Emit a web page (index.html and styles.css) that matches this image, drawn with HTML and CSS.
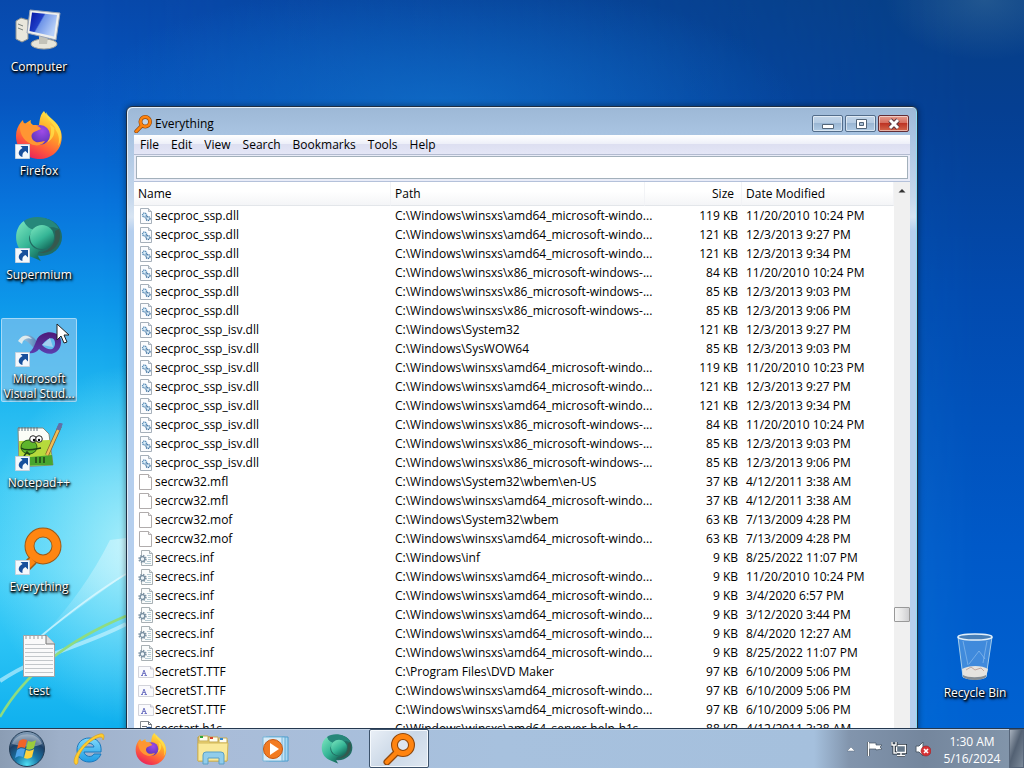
FILE: index.html
```html
<!DOCTYPE html>
<html lang="en">
<head>
<meta charset="utf-8">
<title>Everything</title>
<link rel="stylesheet" href="styles.css">
</head>
<body>
<svg class="defs" aria-hidden="true">
  <defs>
    <linearGradient id="ffx" x1="0.8" y1="0" x2="0.3" y2="1"><stop offset="0" stop-color="#fff04a"/><stop offset=".4" stop-color="#ffa427"/><stop offset=".72" stop-color="#ff5a3c"/><stop offset="1" stop-color="#e8205c"/></linearGradient>
    <radialGradient id="ffp" cx=".6" cy=".3" r=".7"><stop offset="0" stop-color="#a04be8"/><stop offset="1" stop-color="#5a35b8"/></radialGradient>
    <linearGradient id="green" x1="0" y1="0" x2=".7" y2="1"><stop offset="0" stop-color="#7fe8c0"/><stop offset=".6" stop-color="#35b596"/><stop offset="1" stop-color="#16705f"/></linearGradient>
    <linearGradient id="screen" x1="0" y1="0" x2="1" y2=".5"><stop offset="0" stop-color="#0614a0"/><stop offset=".45" stop-color="#1f3fc8"/><stop offset=".5" stop-color="#6f95e8"/><stop offset="1" stop-color="#b8d0f8"/></linearGradient>
    <radialGradient id="orb" cx=".5" cy=".95" r=".95"><stop offset="0" stop-color="#4fe0f4"/><stop offset=".35" stop-color="#1a78a8"/><stop offset=".7" stop-color="#1c3f66"/><stop offset="1" stop-color="#8fa9c2"/></radialGradient>
    <linearGradient id="ie" x1="0" y1="0" x2="0" y2="1"><stop offset="0" stop-color="#7fd8fa"/><stop offset="1" stop-color="#1f9ce4"/></linearGradient>
    <linearGradient id="vs" x1="0" y1="0" x2="0" y2="1"><stop offset="0" stop-color="#4d1a78"/><stop offset="1" stop-color="#5a3fb0"/></linearGradient>
    <linearGradient id="vsl" x1="0" y1="0" x2="1" y2="0"><stop offset="0" stop-color="#b4d6e6"/><stop offset="1" stop-color="#3f72b0"/></linearGradient>
    <symbol id="i-firefox" viewBox="0 0 48 48">
      <path d="M29 0c2 4 7 7 11 11 6 6 8 13 6 21-2 9-11 16-21 16C11 48 1 38 1 25c0-6 2-10 5-14l2-2c0 2 1 3 2 4 2-2 4-3 6-4-1 2 0 4 2 5h6c1-6 1-10 5-14z" fill="url(#ffx)"/>
      <path d="M31 1c-1 8 8 10 10 18-2-3-4-4-6-5 3 8-1 15-4 18 8-4 9-10 8-15 5 5 6 12 4 18 5-7 4-17-3-24-4-4-7-6-9-10z" fill="#ffe14a" opacity=".75"/>
      <circle cx="25" cy="24" r="10" fill="url(#ffp)"/>
      <path d="M5 13c5-2 8 1 13 1 3 0 6 1 8 4l-7 3c-4 2-3 8 2 10 3 1 6-1 9-1-2 4-8 6-14 3C7 29 4 20 5 13z" fill="#ff9633"/>
    </symbol>
    <symbol id="i-supermium" viewBox="0 0 48 44">
      <ellipse cx="26" cy="20" rx="21" ry="19" fill="#216c62"/>
      <path d="M9 4C-2 11-2 32 12 38c4 2 10 4 14 6-6-8-3-10 2-11C15 34 8 18 21 13 16 12 11 9 9 4z" fill="url(#green)"/>
      <path d="M9 4C18-3 38-1 44 12c-8-4-13 0-22 1-7 0-11-4-13-9z" fill="#26877a"/>
      <circle cx="27" cy="20" r="12" fill="url(#green)"/>
      <path d="M44 12c4 12-4 25-20 24 10-2 18-9 16-22z" fill="#3e5046" opacity=".7"/>
    </symbol>
    <symbol id="i-search" viewBox="0 0 32 32">
      <path d="M14 19L4 29" stroke="#90480c" stroke-width="7" stroke-linecap="round"/>
      <circle cx="20" cy="12" r="8.500" fill="#fff" fill-opacity=".35" stroke="#90480c" stroke-width="7"/>
      <path d="M14 19L4 29" stroke="#ff8410" stroke-width="4.500" stroke-linecap="round"/>
      <circle cx="20" cy="12" r="8.500" fill="none" stroke="#ff8410" stroke-width="4.800"/>
    </symbol>
    <symbol id="i-shortcut" viewBox="0 0 15 15">
      <path d="M.5.5h14v14H.5z" fill="#f4f8fc" stroke="#c5d2de"/>
      <path d="M5.500 2H13v7.500L10.500 7C8 8 7 10 7.500 13 3 12 2 7 7.500 4z" fill="#174f9c"/>
    </symbol>
    <symbol id="f-dll" viewBox="0 0 16 16">
      <path d="M2.500.5h8l3 3v12h-11z" fill="#fbfcfe" stroke="#a6b0ba"/><path d="M10.500.5v3h3" fill="#d9e2ea" stroke="#a6b0ba"/>
      <circle cx="6.500" cy="7" r="2" fill="#d9ecf8" stroke="#5a8cb6" stroke-dasharray="1.200 .6" stroke-width="1.400"/>
      <circle cx="10" cy="10.500" r="2" fill="#d9ecf8" stroke="#41729f" stroke-dasharray="1.200 .6" stroke-width="1.400"/>
    </symbol>
    <symbol id="f-blank" viewBox="0 0 16 16">
      <path d="M1.500.5h9l3 3v12h-12z" fill="#fff" stroke="#b0acac"/><path d="M10.500.5v3h3" fill="#eee" stroke="#b0acac"/>
    </symbol>
    <symbol id="f-inf" viewBox="0 0 16 16">
      <path d="M3.500.5h8l3 3v12h-11z" fill="#fafcfc" stroke="#a8b0b4"/><path d="M11.500.5v3h3" fill="#e3e8ea" stroke="#a8b0b4"/>
      <path d="M9 5.500h4M10 7.500h3M10 9.500h3M9 11.500h4M7 13.500h6" stroke="#b5cad2"/>
      <circle cx="4.500" cy="9" r="3" fill="none" stroke="#8296a6" stroke-width="2.400" stroke-dasharray="1.300 1.056"/>
      <circle cx="4.500" cy="9" r="2.300" fill="#eef4f8" stroke="#788fa0" stroke-width="1.200"/>
    </symbol>
    <symbol id="f-ttf" viewBox="0 0 16 16">
      <path d="M.5 2.500h12l3 2.500v8.500H.5z" fill="#fafafd" stroke="#d2d3da"/><path d="M12.500 2.500V5h3" fill="#e6e6ee" stroke="#c4c5d0"/>
      <path d="M3 11.500h2M6.500 11.500H9M4 11.500l2-5.500 2 5.500M5 9.500h2.500" stroke="#7377c4" fill="none"/>
    </symbol>
    <symbol id="f-help" viewBox="0 0 16 16">
      <path d="M2.500.5h8l3 3v12h-11z" fill="#fff" stroke="#83898f"/><path d="M10.500.5v3h3M4 5.500h5M4 7.500h4" stroke="#666d75" fill="none"/>
      <circle cx="11" cy="9.500" r="3" fill="#cfe0f4" stroke="#2d5594" stroke-width="1.500"/>
    </symbol>
  </defs>
</svg>

<main class="desktop">
  <svg class="wallpaper" viewBox="0 0 1024 728" preserveAspectRatio="none" aria-hidden="true">
    <defs>
      <linearGradient id="wl" x1="0" y1="0" x2="0" y2="1">
        <stop offset="0" stop-color="#0849ac"/><stop offset=".14" stop-color="#0656c0"/><stop offset=".28" stop-color="#0874dc"/><stop offset=".42" stop-color="#0d98ea"/><stop offset=".55" stop-color="#20b8f0"/><stop offset=".67" stop-color="#40cbf5"/><stop offset=".78" stop-color="#48d0f8"/><stop offset=".88" stop-color="#2bc3f5"/><stop offset="1" stop-color="#0fb0ee"/>
      </linearGradient>
      <linearGradient id="wr" x1="0" y1="0" x2="0" y2="1">
        <stop offset="0" stop-color="#073f85"/><stop offset=".15" stop-color="#053f92"/><stop offset=".4" stop-color="#024aae"/><stop offset=".75" stop-color="#0059c8"/><stop offset="1" stop-color="#0062d2"/>
      </linearGradient>
      <linearGradient id="fade" x1="0" y1="0" x2="1" y2="0"><stop offset=".1" stop-color="#000"/><stop offset=".95" stop-color="#fff"/></linearGradient>
      <mask id="wm"><rect width="1024" height="728" fill="url(#fade)"/></mask>
      <radialGradient id="wt"><stop offset="0" stop-color="#1272cc" stop-opacity=".75"/><stop offset="1" stop-color="#1272cc" stop-opacity="0"/></radialGradient>
      <radialGradient id="wh"><stop offset="0" stop-color="#6e9bb0" stop-opacity=".25"/><stop offset="1" stop-color="#6e9bb0" stop-opacity="0"/></radialGradient>
      <radialGradient id="glow"><stop offset="0" stop-color="#b5f3fb" stop-opacity=".9"/><stop offset="1" stop-color="#9cecfb" stop-opacity="0"/></radialGradient>
      <linearGradient id="ray" x1="0" y1="1" x2="1" y2="0"><stop offset="0" stop-color="#fff" stop-opacity="0"/><stop offset="1" stop-color="#e4fbff" stop-opacity=".5"/></linearGradient>
    </defs>
    <rect width="1024" height="728" fill="url(#wl)"/>
    <rect width="1024" height="728" fill="url(#wr)" mask="url(#wm)"/>
    <ellipse cx="440" cy="110" rx="360" ry="130" fill="url(#wt)"/>
    <ellipse cx="985" cy="0" rx="100" ry="60" fill="url(#wh)"/>
    <ellipse cx="135" cy="545" rx="150" ry="180" fill="url(#glow)"/>
    <path d="M42 636Q84 592 110 540L126 538V574Q90 600 42 636z" fill="url(#ray)"/>
    <path d="M0 681C40 654 84 646 126 624" fill="none" stroke="#d3f7ff" stroke-width="4" opacity=".6"/>
    <path d="M40 637C70 612 96 592 126 574" fill="none" stroke="#e6fbff" stroke-width="2" opacity=".7"/>
    <path d="M0 717C28 668 78 636 126 616" fill="none" stroke="#8fdc80" stroke-width="2.500"/>
  </svg>

  <nav class="shortcuts" aria-label="Desktop">
    <a class="shortcut" href="#computer">
      <svg class="art" viewBox="0 0 48 48" aria-hidden="true">
        <path d="M1 14l5-3 7 2v19l-6 3-6-3z" fill="#e9e7dc" stroke="#8f9492"/><path d="M3 17l5 2M3 21l5 2" stroke="#77807c"/>
        <ellipse cx="29" cy="37" rx="13" ry="5" fill="#e7e5da" stroke="#a8a69c"/><path d="M24 28l9 2-1 7h-8z" fill="#c3c2b8"/>
        <path d="M15 3l30 3-4 27-29-7z" fill="#eeefed" stroke="#9ba5b5"/><path d="M17 5.500l25 2.500-3 21.500L14.500 24z" fill="url(#screen)"/>
      </svg>
      <span class="label">Computer</span>
    </a>
    <a class="shortcut" href="#firefox">
      <span class="art"><svg class="art-fill" aria-hidden="true"><use href="#i-firefox"/></svg><svg class="arrow" aria-hidden="true"><use href="#i-shortcut"/></svg></span>
      <span class="label">Firefox</span>
    </a>
    <a class="shortcut" href="#supermium">
      <span class="art"><svg class="art-fill" aria-hidden="true"><use href="#i-supermium"/></svg><svg class="arrow" aria-hidden="true"><use href="#i-shortcut"/></svg></span>
      <span class="label">Supermium</span>
    </a>
    <a class="shortcut is-hot" href="#visual-studio">
      <span class="art"><svg class="art-fill" viewBox="0 0 48 48" aria-hidden="true"><path d="M4 22c3-7 10-8 15-3l7 8-4 5-7-7c-4-4-7-5-11-3z" fill="url(#vsl)"/><path d="M3 22c4-6 9-7 14-2-5-2-9 0-10 5z" fill="#deebee"/><path fill-rule="evenodd" d="M22 20c6-10 25-9 24 4-1 12-14 14-22 6-3 4-7 5-11 4 5-2 7-9 9-14zm5 6c7 7 13 5 13-2 0-5-5-8-13 2z" fill="url(#vs)"/><path d="M27 26l8-7 3 9z" fill="#b7d3f0" opacity=".8"/></svg><svg class="arrow" aria-hidden="true"><use href="#i-shortcut"/></svg></span>
      <span class="label">Microsoft Visual Stud...</span>
    </a>
    <a class="shortcut" href="#notepad">
      <span class="art"><svg class="art-fill" viewBox="0 0 48 48" aria-hidden="true"><path d="M3 5h25l6 6 4 31-34 2z" fill="#fbfdf8" stroke="#818a80"/><path d="M4 4v4m3-4v4m3-4v4m3-4v4m3-4v4m3-4v4m3-4v4" stroke="#637580"/><path d="M4 18l31-1 2 25-33 1z" fill="#b6da3c"/><path d="M5 35l32-3 1 10-33 1z" fill="#48a52e"/><ellipse cx="14" cy="24" rx="8" ry="7" fill="#5eb52c" stroke="#285c18"/><circle cx="18" cy="16" r="3.300" fill="#fff" stroke="#222"/><circle cx="24" cy="16" r="3.300" fill="#fff" stroke="#222"/><circle cx="19" cy="17" r="1.200"/><circle cx="24" cy="17" r="1.200"/><path d="M6 25c6 4 14 1 20 0M9 33l3-4 3 3m6 8v-6m4 6v-6m4 6v-6" fill="none" stroke="#1f4416" stroke-width="1.500"/><path d="M45 3L32 32" stroke="#81602d" stroke-width="4"/><path d="M45 3L32 32" stroke="#f0bd55" stroke-width="2.500"/><path d="M46 0l-3 7" stroke="#626fa8" stroke-width="4"/></svg><svg class="arrow" aria-hidden="true"><use href="#i-shortcut"/></svg></span>
      <span class="label">Notepad++</span>
    </a>
    <a class="shortcut" href="#everything">
      <span class="art"><svg class="art-fill" viewBox="0 0 48 48" aria-hidden="true"><path d="M18 33L7 44" stroke="#9c5a18" stroke-width="10"/><circle cx="28" cy="19" r="13.500" fill="none" stroke="#9c5a18" stroke-width="10"/><path d="M18 33L7 44" stroke="#ff8611" stroke-width="7"/><circle cx="28" cy="19" r="13.500" fill="none" stroke="#ff8611" stroke-width="8"/></svg><svg class="arrow" aria-hidden="true"><use href="#i-shortcut"/></svg></span>
      <span class="label">Everything</span>
    </a>
    <a class="shortcut" href="#test">
      <svg class="art" viewBox="0 0 48 48" aria-hidden="true"><path d="M8.500 4.500h23l8 8v33h-31z" fill="#fafafa" stroke="#a0a4a8"/><path d="M31 4v9h9" fill="#ddd" stroke="#777"/><path d="M11 5v3m4-3v3m4-3v3m4-3v3m4-3v3" stroke="#999"/><path d="M10 13.500h20M10 17.500h28M10 21.500h28M10 25.500h28M10 29.500h28M10 33.500h28M10 37.500h28M10 41.500h28" stroke="#c3c7ca"/></svg>
      <span class="label">test</span>
    </a>
  </nav>

  <a class="shortcut recycle" href="#recycle-bin">
    <svg class="art" viewBox="0 0 48 48" aria-hidden="true"><path d="M7 4l5 40c5 3 19 3 23 0l6-40z" fill="#7fb6ea" fill-opacity=".5" stroke="#a5cdea"/><path d="M11 36c7-4 20-4 26 0l-2 8c-5 3-18 3-23 0z" fill="#e5e3df"/><path d="M12 42c5 3 18 3 23 0v2c-4 4-18 4-23 0z" fill="#858d94"/><path d="M12 8l5 24M36 8l-4 22M18 31l10-13 6 8" stroke="#d8effc" fill="none" opacity=".35"/><path d="M15 37l5-3 4 3 6-2 3 3" stroke="#c3a8a0" fill="none"/><ellipse cx="24" cy="4" rx="17" ry="3" fill="#477fb8" stroke="#e2f0fa" stroke-width="1.500"/></svg>
    <span class="label">Recycle Bin</span>
  </a>

  <section class="window" aria-label="Everything">
    <header class="titlebar">
      <svg class="title-icon" aria-hidden="true"><use href="#i-search"/></svg>
      <h1 class="title">Everything</h1>
      <div class="controls">
        <button class="control" type="button" aria-label="Minimize"><svg class="glyph" viewBox="0 0 14 12" aria-hidden="true"><path d="M1.500 6.500h11v4h-11z" fill="#fff" stroke="#526579"/></svg></button>
        <button class="control" type="button" aria-label="Maximize"><svg class="glyph" viewBox="0 0 14 12" aria-hidden="true"><path d="M2.500 1.500h10v9h-10z" fill="#fff" stroke="#526579"/><path d="M5.500 4.500h4v3h-4z" fill="#a9bfd5" stroke="#526579"/></svg></button>
        <button class="control close" type="button" aria-label="Close"><svg class="glyph" viewBox="0 0 14 12" aria-hidden="true"><path d="M3 2l8 8M11 2l-8 8" stroke="#5f3840" stroke-width="5"/><path d="M3 2l8 8M11 2l-8 8" stroke="#fff" stroke-width="3"/></svg></button>
      </div>
    </header>
    <div class="client">
      <div class="menubar" role="menubar">
        <button class="menu" type="button" role="menuitem">File</button>
        <button class="menu" type="button" role="menuitem">Edit</button>
        <button class="menu" type="button" role="menuitem">View</button>
        <button class="menu" type="button" role="menuitem">Search</button>
        <button class="menu" type="button" role="menuitem">Bookmarks</button>
        <button class="menu" type="button" role="menuitem">Tools</button>
        <button class="menu" type="button" role="menuitem">Help</button>
      </div>
      <div class="searchbar"><input class="search" type="text" aria-label="Search"></div>
      <div class="results">
        <div class="list">
        <table class="files">
          <colgroup><col class="col-name"><col class="col-path"><col class="col-size"><col></colgroup>
          <thead><tr><th>Name</th><th>Path</th><th class="size">Size</th><th>Date Modified</th></tr></thead>
          <tbody>
            <tr><td><svg class="file"><use href="#f-dll"/></svg>secproc_ssp.dll</td><td>C:\Windows\winsxs\amd64_microsoft-windo...</td><td class="size">119 KB</td><td>11/20/2010 10:24 PM</td></tr>
            <tr><td><svg class="file"><use href="#f-dll"/></svg>secproc_ssp.dll</td><td>C:\Windows\winsxs\amd64_microsoft-windo...</td><td class="size">121 KB</td><td>12/3/2013 9:27 PM</td></tr>
            <tr><td><svg class="file"><use href="#f-dll"/></svg>secproc_ssp.dll</td><td>C:\Windows\winsxs\amd64_microsoft-windo...</td><td class="size">121 KB</td><td>12/3/2013 9:34 PM</td></tr>
            <tr><td><svg class="file"><use href="#f-dll"/></svg>secproc_ssp.dll</td><td>C:\Windows\winsxs\x86_microsoft-windows-...</td><td class="size">84 KB</td><td>11/20/2010 10:24 PM</td></tr>
            <tr><td><svg class="file"><use href="#f-dll"/></svg>secproc_ssp.dll</td><td>C:\Windows\winsxs\x86_microsoft-windows-...</td><td class="size">85 KB</td><td>12/3/2013 9:03 PM</td></tr>
            <tr><td><svg class="file"><use href="#f-dll"/></svg>secproc_ssp.dll</td><td>C:\Windows\winsxs\x86_microsoft-windows-...</td><td class="size">85 KB</td><td>12/3/2013 9:06 PM</td></tr>
            <tr><td><svg class="file"><use href="#f-dll"/></svg>secproc_ssp_isv.dll</td><td>C:\Windows\System32</td><td class="size">121 KB</td><td>12/3/2013 9:27 PM</td></tr>
            <tr><td><svg class="file"><use href="#f-dll"/></svg>secproc_ssp_isv.dll</td><td>C:\Windows\SysWOW64</td><td class="size">85 KB</td><td>12/3/2013 9:03 PM</td></tr>
            <tr><td><svg class="file"><use href="#f-dll"/></svg>secproc_ssp_isv.dll</td><td>C:\Windows\winsxs\amd64_microsoft-windo...</td><td class="size">119 KB</td><td>11/20/2010 10:23 PM</td></tr>
            <tr><td><svg class="file"><use href="#f-dll"/></svg>secproc_ssp_isv.dll</td><td>C:\Windows\winsxs\amd64_microsoft-windo...</td><td class="size">121 KB</td><td>12/3/2013 9:27 PM</td></tr>
            <tr><td><svg class="file"><use href="#f-dll"/></svg>secproc_ssp_isv.dll</td><td>C:\Windows\winsxs\amd64_microsoft-windo...</td><td class="size">121 KB</td><td>12/3/2013 9:34 PM</td></tr>
            <tr><td><svg class="file"><use href="#f-dll"/></svg>secproc_ssp_isv.dll</td><td>C:\Windows\winsxs\x86_microsoft-windows-...</td><td class="size">84 KB</td><td>11/20/2010 10:24 PM</td></tr>
            <tr><td><svg class="file"><use href="#f-dll"/></svg>secproc_ssp_isv.dll</td><td>C:\Windows\winsxs\x86_microsoft-windows-...</td><td class="size">85 KB</td><td>12/3/2013 9:03 PM</td></tr>
            <tr><td><svg class="file"><use href="#f-dll"/></svg>secproc_ssp_isv.dll</td><td>C:\Windows\winsxs\x86_microsoft-windows-...</td><td class="size">85 KB</td><td>12/3/2013 9:06 PM</td></tr>
            <tr><td><svg class="file"><use href="#f-blank"/></svg>secrcw32.mfl</td><td>C:\Windows\System32\wbem\en-US</td><td class="size">37 KB</td><td>4/12/2011 3:38 AM</td></tr>
            <tr><td><svg class="file"><use href="#f-blank"/></svg>secrcw32.mfl</td><td>C:\Windows\winsxs\amd64_microsoft-windo...</td><td class="size">37 KB</td><td>4/12/2011 3:38 AM</td></tr>
            <tr><td><svg class="file"><use href="#f-blank"/></svg>secrcw32.mof</td><td>C:\Windows\System32\wbem</td><td class="size">63 KB</td><td>7/13/2009 4:28 PM</td></tr>
            <tr><td><svg class="file"><use href="#f-blank"/></svg>secrcw32.mof</td><td>C:\Windows\winsxs\amd64_microsoft-windo...</td><td class="size">63 KB</td><td>7/13/2009 4:28 PM</td></tr>
            <tr><td><svg class="file"><use href="#f-inf"/></svg>secrecs.inf</td><td>C:\Windows\inf</td><td class="size">9 KB</td><td>8/25/2022 11:07 PM</td></tr>
            <tr><td><svg class="file"><use href="#f-inf"/></svg>secrecs.inf</td><td>C:\Windows\winsxs\amd64_microsoft-windo...</td><td class="size">9 KB</td><td>11/20/2010 10:24 PM</td></tr>
            <tr><td><svg class="file"><use href="#f-inf"/></svg>secrecs.inf</td><td>C:\Windows\winsxs\amd64_microsoft-windo...</td><td class="size">9 KB</td><td>3/4/2020 6:57 PM</td></tr>
            <tr><td><svg class="file"><use href="#f-inf"/></svg>secrecs.inf</td><td>C:\Windows\winsxs\amd64_microsoft-windo...</td><td class="size">9 KB</td><td>3/12/2020 3:44 PM</td></tr>
            <tr><td><svg class="file"><use href="#f-inf"/></svg>secrecs.inf</td><td>C:\Windows\winsxs\amd64_microsoft-windo...</td><td class="size">9 KB</td><td>8/4/2020 12:27 AM</td></tr>
            <tr><td><svg class="file"><use href="#f-inf"/></svg>secrecs.inf</td><td>C:\Windows\winsxs\amd64_microsoft-windo...</td><td class="size">9 KB</td><td>8/25/2022 11:07 PM</td></tr>
            <tr><td><svg class="file"><use href="#f-ttf"/></svg>SecretST.TTF</td><td>C:\Program Files\DVD Maker</td><td class="size">97 KB</td><td>6/10/2009 5:06 PM</td></tr>
            <tr><td><svg class="file"><use href="#f-ttf"/></svg>SecretST.TTF</td><td>C:\Windows\winsxs\amd64_microsoft-windo...</td><td class="size">97 KB</td><td>6/10/2009 5:06 PM</td></tr>
            <tr><td><svg class="file"><use href="#f-ttf"/></svg>SecretST.TTF</td><td>C:\Windows\winsxs\amd64_microsoft-windo...</td><td class="size">97 KB</td><td>6/10/2009 5:06 PM</td></tr>
            <tr><td><svg class="file"><use href="#f-help"/></svg>secstart.h1s</td><td>C:\Windows\winsxs\amd64_server-help-h1s...</td><td class="size">88 KB</td><td>4/12/2011 3:38 AM</td></tr>
          </tbody>
        </table>
        </div>
        <div class="scrollbar" aria-hidden="true">
          <svg class="scroll-arrow" viewBox="0 0 16 17"><path d="M4.500 10.500L8 7l3.500 3.500z" fill="#333"/></svg>
          <div class="scroll-space"></div>
          <div class="thumb"></div>
          <div class="scroll-rest"></div>
          <svg class="scroll-arrow" viewBox="0 0 16 17"><path d="M4.500 7L8 10.500 11.500 7z" fill="#333"/></svg>
        </div>
      </div>
    </div>
  </section>

  <svg class="pointer" viewBox="0 0 14 21" aria-hidden="true"><path d="M1 1v16l4-4 3 7 3-1-3-7h5z" fill="#fff" stroke="#222"/></svg>
</main>

<footer class="taskbar">
  <button class="start" type="button" aria-label="Start">
    <svg class="orb" viewBox="0 0 38 38" aria-hidden="true"><circle cx="19" cy="19" r="17.500" fill="url(#orb)" stroke="#233c55"/><path d="M4 14C8 1 30 1 34 14c-9 5-20 2-30 0z" fill="#fff" opacity=".35"/><path d="M11 11c3-2 5-2 8-1l-2 8c-3-1-5-1-8 1z" fill="#f06428"/><path d="M20 11c3 1 5 1 8-1l-2 8c-3 2-5 2-8 1z" fill="#9ccc3c"/><path d="M9 20c3-2 5-2 8-1l-2 8c-3-1-5-1-8 1z" fill="#4da3e8"/><path d="M18 20c3 1 5 1 8-1l-2 8c-3 2-5 2-8 1z" fill="#ffd23c"/></svg>
  </button>
  <nav class="tasks" aria-label="Taskbar">
    <button class="task" type="button" aria-label="Internet Explorer"><svg class="task-icon" viewBox="0 0 32 32" aria-hidden="true"><path d="M28 21c-2 5-6 8-12 8C9 29 4 24 4 17S9 5 16 5c8 0 13 5 12 14H11c1 5 8 6 10 2zM11 14h10c-1-5-9-5-10 0z" fill="url(#ie)" stroke="#1b78bd" fill-rule="evenodd"/><path d="M2 31C-3 25 14 4 27 1c4-1 5 2 3 6 0-2-1-3-3-3C17 6 4 20 5 29c0 2-2 3-3 2z" fill="#ffcd2e" stroke="#d69b16" stroke-width=".6"/></svg></button>
    <button class="task" type="button" aria-label="Firefox"><svg class="task-icon" aria-hidden="true"><use href="#i-firefox"/></svg></button>
    <button class="task" type="button" aria-label="Windows Explorer"><svg class="task-icon" viewBox="0 0 32 32" aria-hidden="true"><path d="M1 4h12l2 3h15v21H1z" fill="#efd779" stroke="#bd9b3c"/><path d="M2 3h9v5H2zM12 4h9v5h-9zM22 5h8v5h-8z" fill="#fffdf0" stroke="#c5ab52"/><path d="M3 4h3" stroke="#2ba73a" stroke-width="2"/><path d="M13 5h3" stroke="#da422a" stroke-width="2"/><path d="M23 6h3" stroke="#3589d0" stroke-width="2"/><path d="M1 10h30l-1 18H1z" fill="#fae999" stroke="#d2b75a"/><path d="M6 31v-9q0-3 3-3h15q3 0 3 3v9h-5v-6H11v6z" fill="#91cdeb" stroke="#5a9fc6"/></svg></button>
    <button class="task" type="button" aria-label="Windows Media Player"><svg class="task-icon" viewBox="0 0 32 32" aria-hidden="true"><path d="M10 4h19v24H10z" fill="#a8d7f1" stroke="#4c9ccc"/><path d="M7 4h19v24H7z" fill="#c3e3f5" stroke="#62a9d3"/><path d="M4 4h19v24H4z" fill="#d8ecf8" stroke="#78b6d8"/><circle cx="14" cy="16" r="9.500" fill="#f27b22" stroke="#c65712"/><path d="M11 10l9 6-9 6z" fill="#fff"/></svg></button>
    <button class="task" type="button" aria-label="Supermium"><svg class="task-icon" aria-hidden="true"><use href="#i-supermium"/></svg></button>
    <button class="task is-active" type="button" aria-label="Everything"><svg class="task-icon" aria-hidden="true"><use href="#i-search"/></svg></button>
  </nav>
  <div class="tray">
    <button class="tray-item" type="button" aria-label="Show hidden icons"><svg class="tray-icon" viewBox="0 0 16 16" aria-hidden="true"><path d="M4 10l4-4 4 4z" fill="#fff" stroke="#5d6e82" stroke-width=".5"/></svg></button>
    <button class="tray-item" type="button" aria-label="Action Center"><svg class="tray-icon" viewBox="0 0 16 16" aria-hidden="true"><path d="M1.500 1v14" stroke="#34404c" stroke-width="3"/><path d="M2 2h7v2h6l-2 2 2 2-6 1V8H2z" fill="#fff" stroke="#42505e" stroke-width=".7"/><path d="M1.500 1v14" stroke="#fff" stroke-width="1.500"/></svg></button>
    <button class="tray-item" type="button" aria-label="Network"><svg class="tray-icon" viewBox="0 0 16 16" aria-hidden="true"><path d="M5.500 4.500h9v7h-9zM10 12v2M6 14.500h8" fill="#657789" stroke="#27323e" stroke-width="3"/><path d="M5.500 4.500h9v7h-9zM10 12v2M6 14.500h8" fill="#657789" stroke="#fff" stroke-width="1.400"/><path d="M1 1v3h4V1M3 4v8h3" fill="none" stroke="#27323e" stroke-width="3"/><path d="M1 1v3h4V1M3 4v8h3" fill="none" stroke="#fff" stroke-width="1.400"/></svg></button>
    <button class="tray-item" type="button" aria-label="Volume muted"><svg class="tray-icon" viewBox="0 0 16 16" aria-hidden="true"><path d="M1 5h3l4-4v14l-4-4H1z" fill="#fff" stroke="#515e6c"/><circle cx="11" cy="10" r="5" fill="#d83235" stroke="#962024" stroke-width=".6"/><path d="M9 8l4 4M13 8l-4 4" stroke="#fff" stroke-width="1.600"/></svg></button>
  </div>
  <time class="clock" datetime="2024-05-16T01:30"><span>1:30 AM</span><span>5/16/2024</span></time>
  <button class="peek" type="button" aria-label="Show desktop"></button>
</footer>
</body>
</html>
```

FILE: styles.css
```css
* { box-sizing: border-box; }

body {
  margin: 0;
  height: 100vh;
  display: flex;
  flex-direction: column;
  overflow: hidden;
  font: 12px/16px "Open Sans", "Noto Sans", sans-serif;
  color: #000;
}

button {
  margin: 0;
  padding: 0;
  border: 0;
  background: none;
  font: inherit;
  color: inherit;
}

.defs { position: absolute; width: 0; height: 0; }

/* Desktop */
.desktop {
  position: relative;
  flex: 1;
  min-height: 0;
  overflow: hidden;
}

.wallpaper { position: absolute; inset: 0; width: 100%; height: 100%; }

.shortcuts {
  position: relative;
  display: flex;
  flex-direction: column;
  align-items: flex-start;
  gap: 20px;
  padding: 6px 1px;
}

.shortcut {
  display: flex;
  flex-direction: column;
  align-items: center;
  width: 76px;
  height: 84px;
  border: 1px solid transparent;
  border-radius: 2px;
  color: #fff;
  text-decoration: none;
}

.shortcut.is-hot {
  border-color: rgba(190, 228, 250, .75);
  background: rgba(160, 205, 238, .55);
}

.art { position: relative; flex: none; width: 48px; height: 48px; }
.art-fill { display: block; width: 48px; height: 48px; }
.arrow { position: absolute; left: 0; bottom: 0; width: 15px; height: 15px; }

.label {
  margin-top: 4px;
  line-height: 15px;
  text-align: center;
  text-shadow: 0 1px 2px #000, 1px 1px 2px #000, 1px 2px 3px #000;
}

.recycle { position: absolute; right: 11px; bottom: 12px; }

.pointer { position: absolute; left: 56px; top: 323px; width: 14px; height: 21px; }

/* Window */
.window {
  position: absolute;
  left: 126px;
  right: 106px;
  top: 106px;
  bottom: -16px;
  display: flex;
  flex-direction: column;
  padding: 0 7px;
  border: 1px solid #1e2e42;
  border-radius: 6px 6px 0 0;
  background: linear-gradient(#9db8d6, #a9c4e2 28px, #c5d7ec 90px, #d7e4f2 110px, #b5cfee 124px);
  box-shadow: inset 1px 1px 0 #e3eef8, inset -1px 0 0 #8bdcf4, 0 0 6px rgba(0, 0, 0, .45);
}

.titlebar { display: flex; align-items: center; height: 28px; padding-top: 6px; flex: none; }
.title-icon { width: 18px; height: 18px; }
.title { margin: 0 0 0 3px; flex: 1; font-size: 12px; font-weight: 400; }
.controls { display: flex; gap: 2px; align-self: flex-start; padding: 2px 1px 0 0; }

.control {
  display: grid;
  place-items: center;
  width: 31px;
  height: 17px;
  border: 1px solid #536d8b;
  border-radius: 2px;
  background: linear-gradient(#c2d5e9, #b3cae2 50%, #9ab6d3 50%, #b0cbe5);
  box-shadow: inset 0 0 0 1px rgba(255, 255, 255, .5);
}

.control.close {
  border-color: #632d35;
  background: linear-gradient(#e49b8c, #d4695a 50%, #bd3424 50%, #d4674c);
}

.glyph { width: 14px; height: 12px; }

.client { display: flex; flex-direction: column; flex: 1; min-height: 0; background: #fff; }

.menubar {
  display: flex;
  flex: none;
  height: 20px;
  border-bottom: 1px solid #b3bbd0;
  background: linear-gradient(#fff, #eef0f9 45%, #dddff1 50%, #e4e6f6);
}

.menu { padding: 0 6px; line-height: 20px; height: 19px; }

.searchbar {
  flex: none;
  padding: 1px 2px 2px;
  border-bottom: 1px solid #b4c1da;
  background: #e9ecf8;
}

.search {
  display: block;
  width: 100%;
  height: 23px;
  padding: 0 4px;
  border: 1px solid #a3b0bb;
  background: #fff;
  font: inherit;
}

.results { display: flex; flex: 1; min-height: 0; overflow: hidden; }
.list { flex: 1; min-width: 0; }

.files {
  width: 100%;
  table-layout: fixed;
  border-collapse: separate;
  border-spacing: 0;
}

.col-name { width: 257px; }
.col-path { width: 254px; }
.col-size { width: 97px; }

.files th {
  height: 24px;
  padding: 0 4px;
  font-weight: 400;
  text-align: left;
  background: linear-gradient(#fff 40%, #f4f5f7);
  border-bottom: 1px solid #e3e6ea;
  border-right: 1px solid #f2f3f6;
}

.files td {
  height: 19px;
  padding: 0 4px;
  line-height: 18px;
  white-space: nowrap;
}

.files .size { text-align: right; }
.files th.size { padding-right: 7px; }
.file { width: 16px; height: 16px; margin-right: 1px; vertical-align: middle; }

.scrollbar {
  display: flex;
  flex-direction: column;
  width: 16px;
  background: #f0f0f0;
}

.scroll-arrow { flex: none; width: 16px; height: 17px; }
.scroll-space { flex: 409; }
.thumb {
  flex: none;
  height: 15px;
  border: 1px solid #999;
  border-radius: 1px;
  background: linear-gradient(90deg, #f5f5f5, #e6e6e6 50%, #cfcfd1);
}
.scroll-rest { flex: 104; }

/* Taskbar */
.taskbar {
  display: flex;
  flex: none;
  height: 40px;
  border-top: 1px solid #25384f;
  background: linear-gradient(90deg, #8b9db4 0, #9eb0c9 60px, #a9bcd8 200px, #a7c1de 500px, #a5c0dd calc(100% - 210px), #8295ad calc(100% - 175px), #74869d calc(100% - 100px), #8497ac);
  box-shadow: inset 0 1px 0 #c2d2e5;
}

.start { display: grid; place-items: center; width: 54px; }
.orb { width: 38px; height: 38px; }
.tasks { display: flex; gap: 2px; flex: 1; padding-left: 5px; }
.task { display: grid; place-items: center; width: 60px; height: 39px; }
.task.is-active {
  border: 1px solid #3c526b;
  border-radius: 2px;
  background: linear-gradient(135deg, #eaf0f7, #cbd8e7 50%, #dfe8f2);
  box-shadow: inset 0 0 0 1px #f5f9fd;
}
.task-icon { width: 32px; height: 32px; }

.tray { display: flex; align-items: center; gap: 8px; }
.tray-item { width: 16px; height: 16px; }
.tray-icon { display: block; width: 16px; height: 16px; }

.clock {
  display: flex;
  flex-direction: column;
  justify-content: center;
  width: 78px;
  padding: 2px 0 0 4px;
  line-height: 17px;
  text-align: center;
  color: #fff;
}

.peek {
  width: 15px;
  border: 1px solid #566579;
  background: linear-gradient(110deg, #a7b1bd, #536173 45%, #7d8b9b);
}
```
